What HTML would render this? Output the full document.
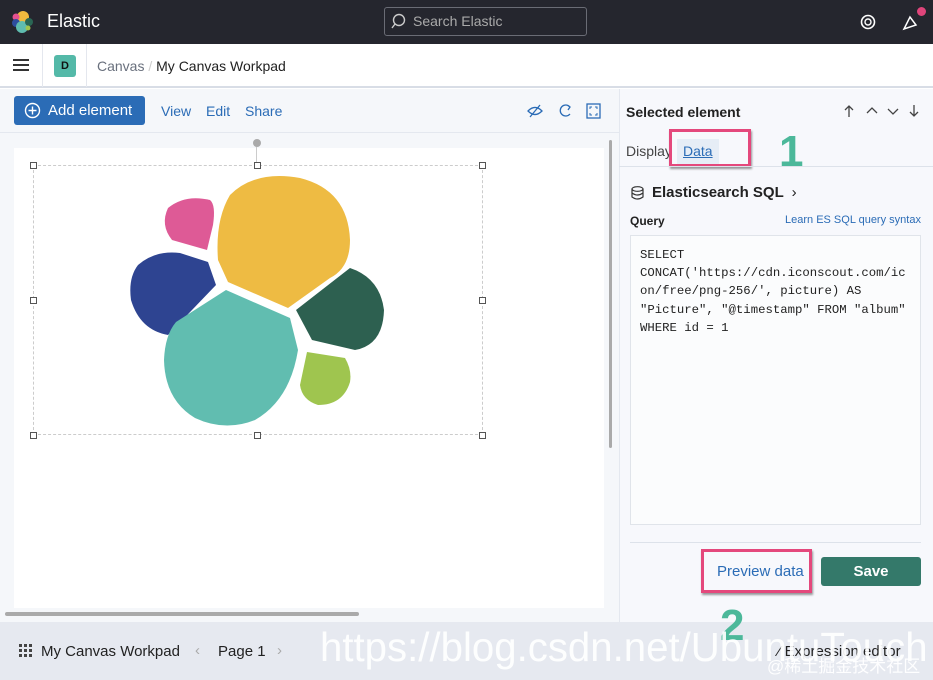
<!DOCTYPE html>
<html><head><style>
*{margin:0;padding:0;box-sizing:border-box}
body{width:933px;height:680px;overflow:hidden;font-family:"Liberation Sans",sans-serif;background:#fff;position:relative}
.abs{position:absolute}
</style></head><body>
<div class="abs" style="left:0;top:0;width:933px;height:44px;background:#25262e"></div>
<svg class="abs" style="left:10px;top:9px" width="24" height="26" viewBox="0 0 24 26">
<circle cx="13" cy="8" r="6" fill="#f0b93e"/><circle cx="6" cy="8" r="3.5" fill="#e5508f"/><circle cx="6" cy="14" r="4" fill="#2e4d9e"/><circle cx="12" cy="18" r="6" fill="#5fbcaf"/><circle cx="19" cy="13" r="4" fill="#2a6654"/><circle cx="18" cy="19" r="2.5" fill="#a1c54d"/></svg>
<div class="abs" style="left:47px;top:11px;color:#fff;font-size:18px">Elastic</div>
<div class="abs" style="left:384px;top:7px;width:203px;height:29px;border:1px solid #6a6c75;border-radius:3px"></div>
<svg class="abs" style="left:391px;top:13px" width="16" height="16"><circle cx="8" cy="7" r="5.5" stroke="#ccc" stroke-width="1.4" fill="none"/><line x1="4" y1="11" x2="1" y2="15" stroke="#ccc" stroke-width="1.4"/></svg>
<div class="abs" style="left:413px;top:13px;color:#aaa;font-size:14px">Search Elastic</div>
<svg class="abs" style="left:859px;top:13px" width="18" height="18"><circle cx="9" cy="9" r="6.5" stroke="#fff" stroke-width="1.6" fill="none"/><circle cx="9" cy="9" r="3" stroke="#fff" stroke-width="1.4" fill="none"/></svg>
<svg class="abs" style="left:902px;top:12px" width="20" height="20"><path d="M2 17 L8 5 L14 13 Z" stroke="#fff" stroke-width="1.5" fill="none"/></svg>
<div class="abs" style="left:917px;top:7px;width:9px;height:9px;border-radius:50%;background:#e0457b"></div>
<div class="abs" style="left:0;top:44px;width:933px;height:44px;background:#fff;border-bottom:2px solid #d8dde6"></div>
<div class="abs" style="left:13px;top:59px;width:16px;height:2px;background:#333;box-shadow:0 5px 0 #333,0 10px 0 #333"></div>
<div class="abs" style="left:42px;top:44px;width:1px;height:43px;background:#e4e7ee"></div>
<div class="abs" style="left:54px;top:55px;width:22px;height:22px;border-radius:3px;background:#54b9a8;font-size:11px;font-weight:bold;text-align:center;line-height:22px;color:#111">D</div>
<div class="abs" style="left:86px;top:44px;width:1px;height:43px;background:#e4e7ee"></div>
<div class="abs" style="left:97px;top:58px;font-size:14px;color:#69707d">Canvas <span style="color:#ccc">/</span> <span style="color:#222">My Canvas Workpad</span></div>
<div class="abs" style="left:0;top:89px;width:619px;height:44px;background:#f5f7fa;border-bottom:1px solid #e4e8ef"></div>
<div class="abs" style="left:14px;top:96px;width:131px;height:29px;background:#2b6cb6;border-radius:3px;color:#fff;font-size:15px;line-height:29px;padding-left:34px">Add element</div>
<svg class="abs" style="left:24px;top:102px" width="17" height="17"><circle cx="8.5" cy="8.5" r="7" stroke="#fff" stroke-width="1.4" fill="none"/><path d="M8.5 4.5v8M4.5 8.5h8" stroke="#fff" stroke-width="1.4"/></svg>
<div class="abs" style="left:161px;top:103px;font-size:14px;color:#2b6cb6">View</div>
<div class="abs" style="left:206px;top:103px;font-size:14px;color:#2b6cb6">Edit</div>
<div class="abs" style="left:245px;top:103px;font-size:14px;color:#2b6cb6">Share</div>
<svg class="abs" style="left:527px;top:103px" width="76" height="16"><path d="M1 8 Q8 1 15 8 Q8 15 1 8Z M3 14 L13 2" stroke="#2b6cb6" stroke-width="1.3" fill="none"/><path d="M43 4 A5.5 5.5 0 1 0 43 11 M40 2 L43 4 L41 7" stroke="#2b6cb6" stroke-width="1.3" fill="none"/><rect x="60" y="1" width="13" height="14" stroke="#2b6cb6" stroke-width="1.3" fill="none"/><path d="M63 6V4h2M70 6V4h-2M63 10v2h2M70 10v2h-2" stroke="#2b6cb6" fill="none"/></svg>
<div class="abs" style="left:0;top:133px;width:619px;height:489px;background:#f5f7fa"></div>
<div class="abs" style="left:14px;top:148px;width:590px;height:460px;background:#fff"></div>
<div class="abs" style="left:609px;top:140px;width:3px;height:308px;background:#aaa;border-radius:2px"></div>
<div class="abs" style="left:5px;top:612px;width:354px;height:4px;background:#aaa;border-radius:2px"></div>
<div class="abs" style="left:33px;top:165px;width:450px;height:270px;border:1px dashed #ccc"></div>
<div class="abs" style="left:253px;top:139px;width:8px;height:8px;border-radius:50%;background:#aaa"></div>
<div class="abs" style="left:256px;top:147px;width:1px;height:18px;background:#ccc"></div>
<div class="abs" style="left:30px;top:162px;width:7px;height:7px;border:1px solid #555;background:#fff"></div>
<div class="abs" style="left:254px;top:162px;width:7px;height:7px;border:1px solid #555;background:#fff"></div>
<div class="abs" style="left:479px;top:162px;width:7px;height:7px;border:1px solid #555;background:#fff"></div>
<div class="abs" style="left:30px;top:297px;width:7px;height:7px;border:1px solid #555;background:#fff"></div>
<div class="abs" style="left:479px;top:297px;width:7px;height:7px;border:1px solid #555;background:#fff"></div>
<div class="abs" style="left:30px;top:432px;width:7px;height:7px;border:1px solid #555;background:#fff"></div>
<div class="abs" style="left:254px;top:432px;width:7px;height:7px;border:1px solid #555;background:#fff"></div>
<div class="abs" style="left:479px;top:432px;width:7px;height:7px;border:1px solid #555;background:#fff"></div>
<svg class="abs" style="left:0;top:0" width="619" height="620">
<path d="M230 195 Q255 170 300 178 Q348 190 350 240 Q350 268 330 278 L288 308 L228 282 L218 260 Q215 220 230 195Z" fill="#eebb43"/>
<path d="M168 208 Q185 194 210 200 Q216 205 213 225 L207 250 L172 240 Q160 225 168 208Z" fill="#de5a96"/>
<path d="M138 265 Q155 250 180 253 L208 262 L216 285 L168 335 Q140 330 131 300 Q128 278 138 265Z" fill="#2e4491"/>
<path d="M176 322 L226 290 L290 318 L298 350 Q290 400 255 420 Q225 432 195 418 Q165 400 164 360 Q165 335 176 322Z" fill="#61bdb0"/>
<path d="M296 310 L350 268 Q380 278 384 310 Q383 345 355 350 L312 340 Z" fill="#2d6050"/>
<path d="M307 352 L345 358 Q352 370 350 382 Q343 405 318 405 Q302 400 300 385 Z" fill="#9fc54f"/>
</svg>
<div class="abs" style="left:619px;top:89px;width:314px;height:533px;background:#f7f8fc;border-left:1px solid #e4e8ef"></div>
<div class="abs" style="left:626px;top:104px;font-size:14px;font-weight:bold;color:#222">Selected element</div>
<svg class="abs" style="left:842px;top:104px" width="80" height="14"><g stroke="#444" stroke-width="1.3" fill="none"><path d="M7 13V2M3 6l4-4 4 4"/><path d="M25 9l5-5 5 5"/><path d="M46 5l5 5 5-5"/><path d="M72 1v11M68 8l4 4 4-4"/></g></svg>
<div class="abs" style="left:626px;top:143px;font-size:14px;color:#444">Display</div>
<div class="abs" style="left:677px;top:139px;width:42px;height:25px;background:#e6edf6"></div>
<div class="abs" style="left:683px;top:143px;font-size:14px;color:#2b6cb6;text-decoration:underline">Data</div>
<div class="abs" style="left:669px;top:129px;width:82px;height:38px;border:3px solid #e4487c;box-shadow:1px 2px 2px rgba(0,0,0,.4)"></div>
<div class="abs" style="left:779px;top:128px;font-size:44px;font-weight:bold;color:#4cb89a;line-height:48px">1</div>
<div class="abs" style="left:619px;top:166px;width:314px;height:1px;background:#dde2ea"></div>
<svg class="abs" style="left:631px;top:186px" width="13" height="14"><ellipse cx="6.5" cy="3" rx="5.5" ry="2.3" stroke="#333" fill="none" stroke-width="1.2"/><path d="M1 3v8q5.5 4 11 0V3M1 7q5.5 4 11 0" stroke="#333" fill="none" stroke-width="1.2"/></svg>
<div class="abs" style="left:652px;top:184px;font-size:15px;font-weight:bold;color:#222">Elasticsearch SQL <span style="font-weight:normal;margin-left:4px">›</span></div>
<div class="abs" style="left:630px;top:214px;font-size:12px;font-weight:bold;color:#222">Query</div>
<div class="abs" style="left:785px;top:214px;font-size:11px;color:#2b6cb6;white-space:nowrap">Learn ES SQL query syntax</div>
<div class="abs" style="left:630px;top:235px;width:291px;height:290px;background:#fbfcfd;border:1px solid #e0e4ea"></div>
<pre class="abs" style="left:640px;top:246px;font-family:'Liberation Mono',monospace;font-size:12.3px;line-height:18.2px;color:#222">SELECT
CONCAT('https://cdn.iconscout.com/ic
on/free/png-256/', picture) AS
"Picture", "@timestamp" FROM "album"
WHERE id = 1</pre>
<div class="abs" style="left:630px;top:542px;width:291px;height:1px;background:#dde2ea"></div>
<div class="abs" style="left:701px;top:549px;width:111px;height:44px;border:3px solid #e4487c;box-shadow:1px 2px 2px rgba(0,0,0,.4)"></div>
<div class="abs" style="left:717px;top:563px;font-size:15px;color:#2b6cb6">Preview data</div>
<div class="abs" style="left:821px;top:557px;width:100px;height:29px;background:#34796a;border-radius:3px;color:#fff;font-size:15px;font-weight:bold;text-align:center;line-height:29px">Save</div>
<div class="abs" style="left:0;top:622px;width:933px;height:58px;background:#e6e9f0"></div>
<svg class="abs" style="left:19px;top:644px" width="13" height="13"><g fill="#444"><rect x="0" y="0" width="3" height="3"/><rect x="5" y="0" width="3" height="3"/><rect x="10" y="0" width="3" height="3"/><rect x="0" y="5" width="3" height="3"/><rect x="5" y="5" width="3" height="3"/><rect x="10" y="5" width="3" height="3"/><rect x="0" y="10" width="3" height="3"/><rect x="5" y="10" width="3" height="3"/><rect x="10" y="10" width="3" height="3"/></g></svg>
<div class="abs" style="left:41px;top:643px;font-size:15px;color:#222">My Canvas Workpad</div>
<div class="abs" style="left:195px;top:642px;font-size:15px;color:#aaa">‹</div>
<div class="abs" style="left:218px;top:643px;font-size:15px;color:#222">Page 1</div>
<div class="abs" style="left:277px;top:642px;font-size:15px;color:#aaa">›</div>
<div class="abs" style="left:778px;top:643px;font-size:15px;color:#222">⁄ Expression editor</div>
<div class="abs" style="left:720px;top:602px;font-size:44px;font-weight:bold;color:#4cb89a;line-height:48px">2</div>
<div class="abs" style="left:320px;top:624px;font-size:41px;color:rgba(255,255,255,.92);white-space:nowrap;transform:scaleX(0.98);transform-origin:0 0">https://blog.csdn.net/UbuntuTouch</div>
<div class="abs" style="left:767px;top:652px;font-size:17px;color:rgba(255,255,255,.95);font-family:'Liberation Sans','Noto Sans CJK SC',sans-serif;white-space:nowrap">@稀土掘金技术社区</div>
</body></html>
